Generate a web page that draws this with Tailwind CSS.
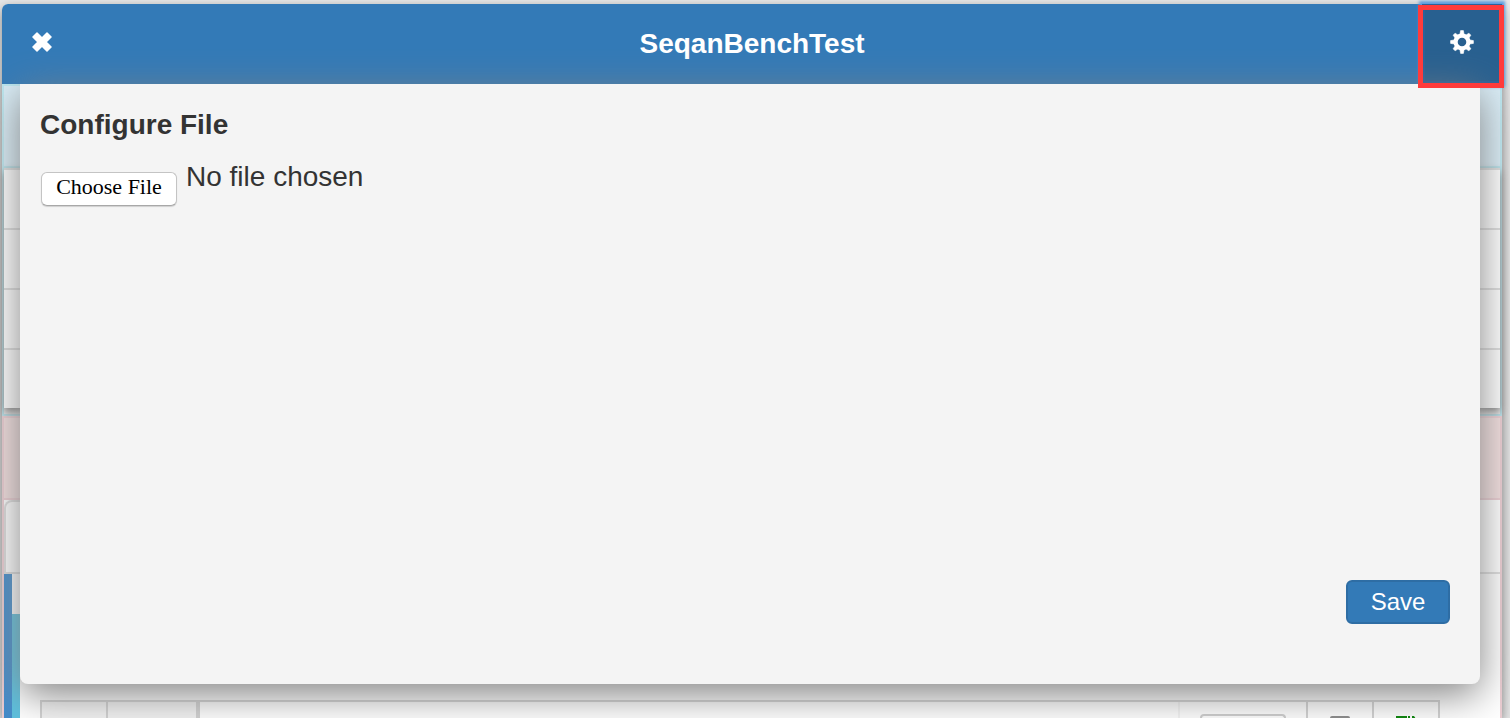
<!DOCTYPE html>
<html lang="en">
<head>
<meta charset="utf-8">
<meta name="viewport" content="width=device-width, initial-scale=1">
<title>SeqanBenchTest</title>
<script src="https://cdn.jsdelivr.net/npm/@tailwindcss/browser@4"></script>
</head>
<body class="relative h-screen overflow-hidden bg-[#e8e8e8] pt-1 pr-2 pl-0.5 font-['Liberation_Sans',Arial,sans-serif] text-[#333]">
<div class="flex h-full flex-col rounded-t-md bg-white shadow-[0_4px_12px_#808080]">

  <!-- Title bar -->
  <header class="flex h-20 shrink-0 rounded-tl-md bg-[#337ab7] text-white">
    <button type="button" aria-label="Close" class="flex h-full w-20 items-center justify-center pb-1">
      <svg class="size-5" viewBox="0 0 20 20" fill="currentColor" stroke="currentColor" stroke-width="1.500" stroke-linejoin="round"><path d="M5 1 10 6 15 1 19 5 14 10 19 15 15 19 10 14 5 19 1 15 6 10 1 5z"/></svg>
    </button>
    <h1 class="flex flex-1 items-center justify-center text-[28px] font-bold">SeqanBenchTest</h1>
    <button type="button" aria-label="Settings" class="relative flex h-full w-20 items-center justify-center bg-[#286090] pb-1 shadow-[0_0_3px_3px_#5b9ddf,inset_0_0_0_3px_#2b6299]">
      <svg class="size-6" viewBox="0 0 24 24" fill="none" stroke="currentColor">
        <circle cx="12" cy="12" r="6.400" stroke-width="4.200"/>
        <g fill="currentColor" stroke-width=".6" stroke-linejoin="round">
          <path d="M9.900 4.500 10.600.6h2.800L14.100 4.500zM9.900 19.500l.7 3.900h2.800l.7-3.900zM4.500 9.900.6 10.600v2.800l3.900.7zM19.500 9.900l3.900.7v2.800l-3.900.7z"/>
          <path transform="rotate(45 12 12)" d="M9.900 4.500 10.600.9h2.800L14.100 4.500zM9.900 19.500l.7 3.600h2.800l.7-3.600zM4.500 9.900.9 10.600v2.800l3.600.7zM19.500 9.900l3.600.7v2.800l-3.600.7z"/>
        </g>
      </svg>
    </button>
  </header>

  <!-- Panels behind the dialog -->
  <section class="shrink-0 border-2 border-[#bce8f1] bg-[#f4f4f4] pb-1.5">
    <div class="h-[82px] border-b-2 border-[#bce8f1] bg-[#d9edf7]"></div>
    <ul class="border-t-2 border-[#ddd] shadow-[0_4px_8px_#808080]">
      <li class="h-[60px] border-b-2 border-[#ddd] bg-white"></li>
      <li class="h-[60px] border-b-2 border-[#ddd] bg-white"></li>
      <li class="h-[60px] border-b-2 border-[#ddd] bg-white"></li>
      <li class="h-[58px] bg-white"></li>
    </ul>
  </section>
  <section class="relative flex min-h-0 flex-1 flex-col border-x-2 border-t-2 border-[#ebccd1] bg-white">
    <div class="h-[82px] shrink-0 border-b-2 border-[#ebccd1] bg-[#f2dede]"></div>
    <div class="flex h-[74px] shrink-0 border-b-2 border-[#ddd] pr-10">
      <div class="w-40 rounded-t-lg border-2 border-b-0 border-[#ddd] bg-white"></div>
    </div>
    <div class="flex min-h-0 flex-1">
      <div class="w-2 bg-[#428bca]"></div>
      <div class="mt-10 w-2 bg-[#5bc0de]"></div>
      <div class="mt-[126px] mr-[60px] ml-5 flex flex-1 border-2 border-b-0 border-[#d0d0d0] bg-white">
        <div class="w-16 bg-[#f3f3f3]"></div>
        <div class="w-[92px] border-x-2 border-[#d0d0d0] bg-[#f3f3f3]"></div>
        <div class="flex-1 border-x-2 border-l-[#d0d0d0] border-r-[#f4f4f4]"></div>
        <div class="flex w-[126px] justify-center pt-3"><div class="w-[86px] rounded-t-md border-2 border-b-0 border-[#ccc]"></div></div>
        <div class="flex w-[68px] justify-center border-x-2 border-[#d0d0d0] pt-[14px]"><div class="w-5 rounded-t bg-[#888]"></div></div>
        <div class="flex w-16 justify-center pt-[14px]">
          <svg class="h-[22px] w-5 shrink-0" viewBox="0 0 20 22" fill="#008000"><path d="M0 0h11v3H7L6 3H2v3H0zM12 0h2v6h-2zM16 0h2l2 3v3h-2V2h-2z"/></svg>
        </div>
      </div>
    </div>
  </section>
</div>

<!-- Configuration dialog -->
<div role="dialog" aria-labelledby="dialog-title" class="absolute top-[84px] right-[30px] left-5 flex h-[600px] flex-col rounded-b-lg bg-[#f4f4f4] px-5 pt-[25px] shadow-[0_10px_40px_#808080]">
  <h2 id="dialog-title" class="text-[28px] leading-8 font-bold">Configure File</h2>
  <div class="mt-5 flex items-start gap-[9px] pl-px">
    <label for="file" class="mt-[11px] flex h-[34px] w-[136px] items-center justify-center rounded-md border border-[#c4c4c4] border-b-[#a8a8a8] bg-white pb-1.5 font-['Liberation_Serif',serif] text-[22px] text-black shadow-[0_1px_1px_rgba(0,0,0,0.15)]">Choose File</label>
    <input id="file" type="file" class="sr-only">
    <span class="text-[28px] leading-8">No file chosen</span>
  </div>
  <div class="mt-auto flex justify-end pr-2.5 pb-[60px]">
    <button type="button" class="h-11 w-[104px] rounded-md border-2 border-[#2e6da4] bg-[#337ab7] text-2xl leading-6 text-white">Save</button>
  </div>
</div>

<!-- Highlight around the settings button -->
<div class="pointer-events-none absolute top-[5px] right-1.5 h-[83px] w-[86px] border-5 border-[#ff3b3b]"></div>
</body>
</html>
